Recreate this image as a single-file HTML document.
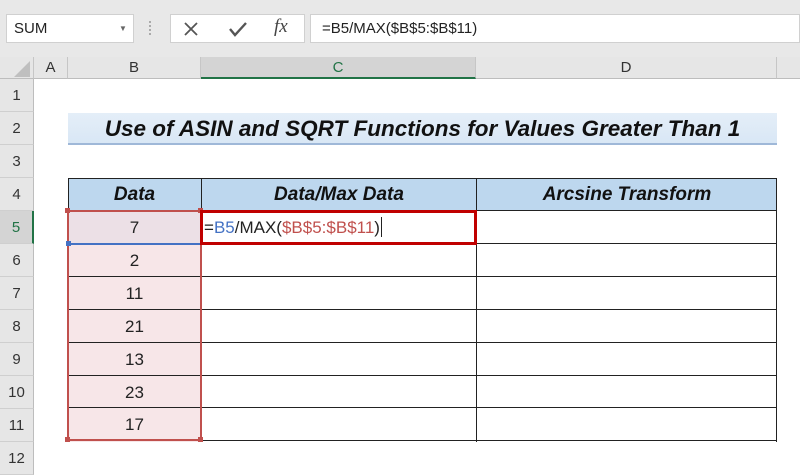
<!DOCTYPE html>
<html><head><style>
*{margin:0;padding:0;box-sizing:border-box}
body{width:800px;height:463px;overflow:hidden;background:#fff;position:relative;font-family:"Liberation Sans",sans-serif}
.a{position:absolute}
.rh{position:absolute;left:0;width:34px;background:#e6e6e6;border-bottom:1px solid #cfcfcf;border-right:1px solid #bdbdbd;color:#333;font-size:15px;text-align:center}
.ch{position:absolute;top:57px;height:22px;background:#e6e6e6;border-right:1px solid #c6c6c6;border-bottom:1px solid #bdbdbd;color:#333;font-size:15px;text-align:center;line-height:22px}
.c{position:absolute;font-family:"Liberation Sans",sans-serif;font-size:17px;color:#222;text-align:center}
</style></head><body>
<div class="a" style="left:0;top:0;width:800px;height:57px;background:#e8e8e8"></div>
<div class="a" style="left:6px;top:14px;width:128px;height:29px;background:#fff;border:1px solid #d0d0d0;font-size:15px;line-height:27px;padding-left:7px;color:#222">SUM<span style="position:absolute;left:112px;top:0;font-size:8px;color:#666">▼</span></div>
<div class="a" style="left:149px;top:21px;width:3px;height:14px;border-left:2px dotted #aaa"></div>
<div class="a" style="left:170px;top:14px;width:135px;height:29px;background:#fff;border:1px solid #d0d0d0"></div>
<svg class="a" style="left:183px;top:21px" width="16" height="16"><path d="M2 2L14 14M14 2L2 14" stroke="#555" stroke-width="1.8"/></svg>
<svg class="a" style="left:228px;top:20px" width="20" height="18"><path d="M2 9L7 15L18 3" stroke="#555" stroke-width="2.4" fill="none"/></svg>
<div class="a" style="left:274px;top:16px;font-family:'Liberation Serif',serif;font-style:italic;font-size:19px;color:#444">fx</div>
<div class="a" style="left:310px;top:14px;width:490px;height:29px;background:#fff;border:1px solid #d0d0d0;font-size:15px;line-height:27px;padding-left:11px;color:#222">=B5/MAX($B$5:$B$11)</div>
<div class="a" style="left:0;top:57px;width:34px;height:406px;background:#e6e6e6"></div>
<div class="ch" style="left:0;width:34px;background:#e6e6e6"><svg width="20" height="20" style="position:absolute;left:12px;top:2px"><path d="M18 2L18 18L2 18Z" fill="#bfbfbf"/></svg></div>
<div class="ch" style="left:34px;width:34px">A</div>
<div class="ch" style="left:68px;width:133px">B</div>
<div class="ch" style="left:201px;width:275px;background:#d4d4d4;border-bottom:2px solid #217346;color:#217346">C</div>
<div class="ch" style="left:476px;width:301px">D</div>
<div class="ch" style="left:777px;width:23px;border-right:none"></div>
<div class="rh" style="top:79px;height:33px;line-height:33px">1</div>
<div class="rh" style="top:112px;height:33px;line-height:33px">2</div>
<div class="rh" style="top:145px;height:33px;line-height:33px">3</div>
<div class="rh" style="top:178px;height:33px;line-height:33px">4</div>
<div class="rh" style="top:211px;height:33px;line-height:33px;background:#d4d4d4;border-right:2px solid #217346;color:#217346">5</div>
<div class="rh" style="top:244px;height:33px;line-height:33px">6</div>
<div class="rh" style="top:277px;height:33px;line-height:33px">7</div>
<div class="rh" style="top:310px;height:33px;line-height:33px">8</div>
<div class="rh" style="top:343px;height:33px;line-height:33px">9</div>
<div class="rh" style="top:376px;height:33px;line-height:33px">10</div>
<div class="rh" style="top:409px;height:33px;line-height:33px">11</div>
<div class="rh" style="top:442px;height:33px;line-height:33px">12</div>
<div class="a" style="left:68px;top:113px;width:709px;height:32px;background:linear-gradient(#e4eef8,#d9e7f5);border-bottom:2px solid #9fb8d8;font-size:22.5px;font-weight:bold;font-style:italic;text-align:center;line-height:31px;color:#111;white-space:nowrap">Use of ASIN and SQRT Functions for Values Greater Than 1</div>
<div class="a" style="left:68px;top:178px;width:709px;height:33px;background:#bdd7ee;border:1px solid #222"></div>
<div class="c" style="left:68px;top:178px;width:133px;height:33px;line-height:33px;font-weight:bold;font-style:italic;font-size:19px;color:#111">Data</div>
<div class="c" style="left:201px;top:178px;width:275px;height:33px;line-height:33px;font-weight:bold;font-style:italic;font-size:19px;color:#111;border-left:1px solid #222">Data/Max Data</div>
<div class="c" style="left:476px;top:178px;width:301px;height:33px;line-height:33px;font-weight:bold;font-style:italic;font-size:19px;color:#111;border-left:1px solid #222">Arcsine Transform</div>
<div class="a" style="left:68px;top:211px;width:133px;height:231px;background:#f7e6e8"></div>
<div class="a" style="left:68px;top:211px;width:133px;height:33px;background:#ece0e6"></div>
<div class="a" style="left:201px;top:211px;width:576px;height:231px;border-right:1px solid #222;border-left:1px solid #222"></div>
<div class="a" style="left:476px;top:211px;width:1px;height:231px;background:#222"></div>
<div class="a" style="left:68px;top:243px;width:709px;height:1px;background:#222"></div>
<div class="a" style="left:68px;top:276px;width:709px;height:1px;background:#222"></div>
<div class="a" style="left:68px;top:309px;width:709px;height:1px;background:#222"></div>
<div class="a" style="left:68px;top:342px;width:709px;height:1px;background:#222"></div>
<div class="a" style="left:68px;top:375px;width:709px;height:1px;background:#222"></div>
<div class="a" style="left:68px;top:407px;width:709px;height:1px;background:#222"></div>
<div class="a" style="left:68px;top:440px;width:709px;height:1px;background:#222"></div>
<div class="a" style="left:68px;top:243px;width:133px;height:2px;background:#4472c4"></div>
<div class="c" style="left:68px;top:211px;width:133px;line-height:33px">7</div>
<div class="c" style="left:68px;top:244px;width:133px;line-height:33px">2</div>
<div class="c" style="left:68px;top:277px;width:133px;line-height:33px">11</div>
<div class="c" style="left:68px;top:310px;width:133px;line-height:33px">21</div>
<div class="c" style="left:68px;top:343px;width:133px;line-height:33px">13</div>
<div class="c" style="left:68px;top:376px;width:133px;line-height:33px">23</div>
<div class="c" style="left:68px;top:408px;width:133px;line-height:33px">17</div>
<div class="a" style="left:67px;top:210px;width:135px;height:231px;border:2px solid #c0504d"></div>
<div class="a" style="left:65px;top:208px;width:5px;height:5px;background:#c0504d"></div>
<div class="a" style="left:198px;top:208px;width:5px;height:5px;background:#c0504d"></div>
<div class="a" style="left:65px;top:437px;width:5px;height:5px;background:#c0504d"></div>
<div class="a" style="left:198px;top:437px;width:5px;height:5px;background:#c0504d"></div>
<div class="a" style="left:66px;top:241px;width:5px;height:5px;background:#4472c4"></div>
<div class="a" style="left:200px;top:210px;width:277px;height:35px;border:3px solid #c00000;background:#fff;font-size:17px;line-height:29px;padding-left:1px;color:#222;white-space:nowrap">=<span style="color:#4472c4">B5</span>/MAX(<span style="color:#c0504d">$B$5:$B$11</span>)<span style="display:inline-block;width:1px;height:20px;background:#222;vertical-align:-4px;margin-left:1px"></span></div>
</body></html>
